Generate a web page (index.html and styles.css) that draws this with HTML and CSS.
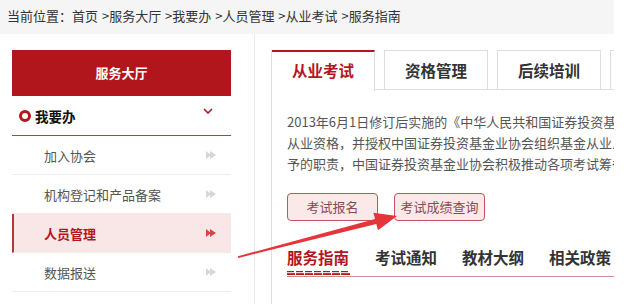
FILE: index.html
```html
<!DOCTYPE html>
<html lang="zh-CN">
<head>
  <meta charset="UTF-8">
  <title>服务指南</title>
  <link rel="stylesheet" href="styles.css">
</head>
<body>
  <div class="page">
    <!-- Breadcrumb -->
    <div class="crumb">当前位置：首页 <i>&gt;</i>服务大厅 <i>&gt;</i>我要办 <i>&gt;</i>人员管理 <i>&gt;</i>从业考试 <i>&gt;</i>服务指南</div>

    <div class="main">
      <!-- Sidebar -->
      <div class="side">
        <div class="side-head">服务大厅</div>
        <div class="side-group">
          <span class="ring"></span>
          <span class="group-name">我要办</span>
          <svg class="chev" width="10" height="6" viewBox="0 0 10 6"><path d="M1 1l4 4 4-4" fill="none" stroke="#b5161e" stroke-width="1.6"/></svg>
        </div>
        <div class="side-item"><span>加入协会</span><svg class="ff" width="10" height="8" viewBox="0 0 10 8"><path d="M0 0l5 4-5 4zM4 0l6 4-6 4z" fill="#d6d6d6"/></svg></div>
        <div class="side-item"><span>机构登记和产品备案</span><svg class="ff" width="10" height="8" viewBox="0 0 10 8"><path d="M0 0l5 4-5 4zM4 0l6 4-6 4z" fill="#d6d6d6"/></svg></div>
        <div class="side-item active"><span>人员管理</span><svg class="ff" width="10" height="8" viewBox="0 0 10 8"><path d="M0 0l5 4-5 4zM4 0l6 4-6 4z" fill="#d9434a"/></svg></div>
        <div class="side-item"><span>数据报送</span><svg class="ff" width="10" height="8" viewBox="0 0 10 8"><path d="M0 0l5 4-5 4zM4 0l6 4-6 4z" fill="#d6d6d6"/></svg></div>
      </div>

      <!-- Content -->
      <div class="content">
        <div class="panel">
          <div class="tabs">
            <div class="tab current">从业考试</div>
            <div class="tab">资格管理</div>
            <div class="tab">后续培训</div>
            <div class="tab">继续教育</div>
          </div>

          <div class="intro">
            <p>2013年6月1日修订后实施的《中华人民共和国证券投资基金法》</p>
            <p>从业资格，并授权中国证券投资基金业协会组织基金从业人员</p>
            <p>予的职责，中国证券投资基金业协会积极推动各项考试筹备工作</p>
          </div>

          <div class="btns">
            <span class="btn">考试报名</span>
            <span class="btn">考试成绩查询</span>
          </div>

          <div class="subtabs">
            <div class="sub current">
              <span>服务指南</span>
              <svg width="63" height="4" viewBox="0 0 63 4">
                <g fill="#b5161e">
                  <rect x="0" y="0" width="7" height="1.2"/><rect x="9" y="0" width="7" height="1.2"/>
                  <rect x="18" y="0" width="7" height="1.2"/><rect x="27" y="0" width="7" height="1.2"/>
                  <rect x="36" y="0" width="7" height="1.2"/><rect x="45" y="0" width="7" height="1.2"/>
                  <rect x="54" y="0" width="7" height="1.2"/>
                  <rect x="0" y="2.2" width="8" height="1.8"/><rect x="9" y="2.2" width="8" height="1.8"/>
                  <rect x="18" y="2.2" width="8" height="1.8"/><rect x="27" y="2.2" width="8" height="1.8"/>
                  <rect x="36" y="2.2" width="8" height="1.8"/><rect x="45" y="2.2" width="8" height="1.8"/>
                  <rect x="54" y="2.2" width="9" height="1.8"/>
                </g>
              </svg>
            </div>
            <div class="sub">考试通知</div>
            <div class="sub">教材大纲</div>
            <div class="sub">相关政策</div>
          </div>
        </div>
      </div>
    </div>

    <!-- Annotation arrow -->
    <svg class="mark" width="626" height="304" viewBox="0 0 626 304">
      <polygon points="237.8,256.3 375.1,219.1 373.4,212.8 397,216 378,230.2 376.3,223.9 238.2,257.9" fill="#e5343a"/>
    </svg>
  </div>
</body>
</html>
```

FILE: styles.css
```css
/* Page */
body {
  margin: 0;
  background: #fff;
  font-family: "Noto Sans CJK SC", "Noto Sans", sans-serif;
  color: #333;
}

.page {
  position: relative;
  width: 614px;
  height: 304px;
  overflow: hidden;
}

/* Breadcrumb */
.crumb {
  height: 34px;
  line-height: 31px;
  padding-left: 7px;
  background: #f5f5f5;
  font-size: 13px;
  color: #333;
  white-space: nowrap;
}

.crumb i {
  font-style: normal;
  margin-left: 1px;
}

.main {
  display: flex;
  height: 270px;
}

/* Sidebar */
.side {
  width: 219px;
  margin: 16px 0 0 12px;
  flex-shrink: 0;
}

.side-head {
  height: 46px;
  line-height: 46px;
  background: #b2161d;
  color: #fff;
  font-size: 13px;
  font-weight: bold;
  text-align: center;
}

.side-group {
  display: flex;
  align-items: center;
  height: 39px;
  padding-left: 7px;
  border-bottom: 1px solid #b04048;
}

.ring {
  width: 6px;
  height: 6px;
  border: 3px solid #b5161e;
  border-radius: 50%;
  margin-right: 4px;
}

.group-name {
  font-size: 13.5px;
  font-weight: bold;
  color: #111;
  flex: 1;
}

.chev {
  margin: 0 18px 10px 0;
}

.side-item {
  display: flex;
  align-items: center;
  justify-content: space-between;
  height: 38px;
  padding: 0 15px 0 32px;
  border-bottom: 1px solid #ececec;
  font-size: 13px;
  color: #555;
}

.side-item.active {
  background: #f9e6e7;
  border-left: 2px solid #c0333a;
  padding-left: 30px;
  color: #b5161e;
  font-weight: bold;
}

/* Content */
.content {
  flex: 1;
  margin-left: 23px;
  padding-left: 16px;
  border-left: 1px solid #e8e8e8;
  min-width: 0;
}

.panel {
  margin-top: 16px;
  height: 254px;
  border-left: 1px solid #dedede;
  overflow: hidden;
}

.tabs {
  display: flex;
  gap: 9px;
  border-bottom: 1px solid #dedede;
  height: 39px;
}

.tab {
  flex-shrink: 0;
  width: 102px;
  height: 38px;
  line-height: 38px;
  border: 1px solid #dedede;
  border-bottom: none;
  text-align: center;
  font-size: 15.5px;
  font-weight: bold;
  color: #333;
}

.tab.current {
  width: 102px;
  height: 38px;
  border-left: none;
  border-top: 2px solid #b5161e;
  line-height: 37px;
  background: #fff;
  color: #b5161e;
  margin-bottom: -1px;
  padding-bottom: 1px;
}

.intro {
  padding: 21px 0 0 15px;
  font-size: 13px;
  line-height: 21px;
  color: #555;
  white-space: nowrap;
}

.intro p {
  margin: 0;
}

.btns {
  display: flex;
  gap: 16px;
  padding: 19px 0 0 15px;
}

.btn {
  width: 89px;
  height: 26px;
  line-height: 26px;
  text-align: center;
  background: #fbe9ea;
  border: 1px solid #c2545a;
  border-radius: 4px;
  font-size: 13px;
  color: #8d4a4e;
}

.subtabs {
  display: flex;
  gap: 25px;
  margin: 24px 0 0 15px;
  border-bottom: 1px solid #cd8d91;
  height: 31px;
}

.sub {
  font-size: 15.5px;
  font-weight: bold;
  line-height: 24px;
  color: #333;
  white-space: nowrap;
}

.sub.current {
  display: flex;
  flex-direction: column;
  color: #b5161e;
}

.sub.current svg {
  margin-top: 2px;
}

/* Annotation */
.mark {
  position: absolute;
  left: 0;
  top: 0;
  pointer-events: none;
}
```
